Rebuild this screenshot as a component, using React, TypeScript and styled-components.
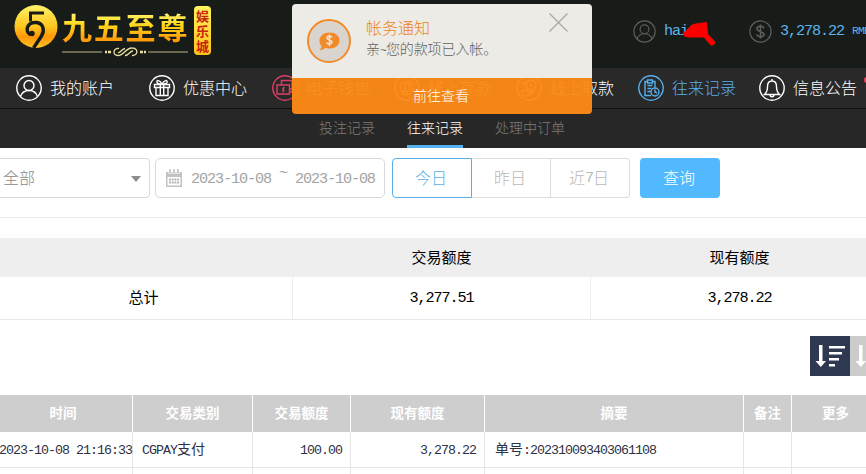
import React from "react";
import styled, { createGlobalStyle, css } from "styled-components";

const GlobalStyle = createGlobalStyle`
  * { box-sizing: border-box; }
  body { margin: 0; background: #fff; overflow: hidden; }
`;

const Page = styled.div`
  position: relative;
  width: 866px;
  height: 474px;
  overflow: hidden;
  background: #fff;
  font-family: "Noto Sans CJK SC", sans-serif;
  font-weight: 300;
  font-size: 16px;
  line-height: 1;
  white-space: nowrap;
`;

/* Half-width Latin text: every glyph advances exactly $cell pixels. */
const Mono = styled.span<{ $cell: number }>`
  font-family: "Liberation Mono", "Noto Sans CJK SC", monospace;
  font-size: ${(p) => p.$cell * 1.9}px;
  letter-spacing: ${(p) => p.$cell - p.$cell * 1.9 * 0.6001}px;
`;

const TopBar = styled.header`
  display: flex;
  height: 68px;
  background: #181c19;
`;

const Logo = styled.div`
  display: flex;
  flex: none;
  width: 633px;
  padding: 4px 0 0 13px;
`;

const Emblem = styled.svg`
  flex: none;
  width: 46px;
  height: 46px;
`;

const Brand = styled.div`
  display: flex;
  flex: none;
  flex-direction: column;
  width: 131px;
  margin: 4px 0 0 3px;
`;

const BrandName = styled.div`
  height: 36px;
  line-height: 36px;
  font-size: 30px;
  font-weight: 700;
  letter-spacing: 1.8px;
  color: transparent;
  background: linear-gradient(#fff67c 10%, #ffd91c 45%, #ff9d08 88%);
  -webkit-background-clip: text;
  background-clip: text;
`;

const Flourish = styled.svg`
  width: 126px;
  height: 10px;
  margin-top: 3px;
`;

const BrandTag = styled.div`
  flex: none;
  width: 17px;
  height: 49px;
  margin: 2px 0 0 1px;
  padding-top: 2px;
  border-radius: 4px;
  background: linear-gradient(#fff45e, #ffc21a);
  color: #c8230c;
  font-size: 13px;
  font-weight: 700;
  line-height: 15px;
  text-align: center;
  white-space: normal;
`;

const Account = styled.div<{ $width: number }>`
  position: relative;
  display: flex;
  flex: none;
  align-items: center;
  width: ${(p) => p.$width}px;
  height: 62px;
  gap: 8px;
  color: #5cb3ec;
`;

const AccountText = styled(Mono)`
  padding-top: 2px;
`;

const SmallIcon = styled.svg`
  flex: none;
  width: 23px;
  height: 23px;
  fill: none;
  stroke: #5c5d5c;
  stroke-width: 1.3;
`;

const Scribble = styled.svg`
  position: absolute;
  left: 48px;
  top: 19px;
  width: 38px;
  height: 28px;
`;

const NavBar = styled.nav`
  display: flex;
  height: 41px;
  padding-left: 16px;
  background: #292929;
  border-bottom: 1px solid #101010;
`;

const NavItem = styled.a<{ $width: number; $color?: string }>`
  display: flex;
  flex: none;
  align-items: center;
  gap: 8px;
  width: ${(p) => p.$width}px;
  color: ${(p) => p.$color ?? "#fff"};
`;

const NavLabel = styled.span`
  padding-bottom: 2px;
`;

const NavIcon = styled.svg<{ $color?: string }>`
  flex: none;
  width: 26px;
  height: 26px;
  fill: none;
  stroke: ${(p) => p.$color ?? "currentColor"};
  stroke-width: 1.4;
`;

const NewDot = styled.i`
  position: absolute;
  left: 864px;
  top: 77px;
  width: 6px;
  height: 6px;
  border-radius: 50%;
  background: #ee4568;
`;

const SubNav = styled.nav`
  display: flex;
  gap: 32px;
  height: 39px;
  padding-left: 319px;
  background: #272727;
  font-size: 14px;
`;

const SubTab = styled.a<{ $active?: boolean }>`
  height: 39px;
  padding-top: 11px;
  color: ${(p) => (p.$active ? "#fff" : "#7c7c7c")};
  ${(p) => p.$active && css`border-bottom: 3px solid #53b4ef;`}
`;

const Filters = styled.section`
  display: flex;
  height: 70px;
  padding-top: 10px;
  border-bottom: 1px solid #ececec;
  color: #a4a4a4;
`;

const Select = styled.div`
  display: flex;
  align-items: center;
  justify-content: space-between;
  width: 154px;
  height: 40px;
  margin: 0 5px 0 -4px;
  padding: 0 8px 3px 6px;
  border: 1px solid #d8d8da;
  border-radius: 4px;
  color: #888;
`;

const Caret = styled.i`
  margin-top: 4px;
  border: 5px solid transparent;
  border-top: 6px solid #8c8c8c;
  border-bottom: 0;
`;

const DateRange = styled.div`
  display: flex;
  align-items: center;
  width: 230px;
  height: 40px;
  padding-left: 9px;
  border: 1px solid #d8d8da;
  border-radius: 5px;
`;

const CalendarIcon = styled.svg`
  width: 18px;
  height: 18px;
  margin-right: 8px;
`;

const DateText = styled(Mono)`
  padding-top: 3px;
`;

const Tilde = styled(Mono)`
  width: 24px;
  padding: 0 0 8px 8px;
`;

const Segments = styled.div`
  display: flex;
  width: 238px;
  height: 40px;
  margin: 0 10px 0 7px;
`;

const Segment = styled.button<{ $active?: boolean }>`
  display: flex;
  flex: 1;
  align-items: center;
  justify-content: center;
  padding: 0 2px 3px 0;
  border: 1px solid #dcdce0;
  border-left-width: 0;
  background: #fff;
  color: #b8b8b8;
  font: inherit;
  &:last-child { border-radius: 0 4px 4px 0; }
  ${(p) => p.$active && css`
    border: 1px solid #58b0e6;
    border-radius: 4px 0 0 4px;
    color: #58afe4;
  `}
`;

const QueryButton = styled.button`
  width: 80px;
  height: 40px;
  padding: 0 2px 3px 0;
  border: 0;
  border-radius: 4px;
  background: #52b9ff;
  color: #fff;
  font: inherit;
`;

const Summary = styled.section`
  display: grid;
  grid-template-columns: repeat(3, 298px);
  grid-template-rows: 39px 43px;
  margin: 20px 0 0 -5px;
  font-size: 15px;
  font-weight: 400;
  color: #000;
`;

const SummaryCell = styled.div<{ $head?: boolean }>`
  display: flex;
  align-items: center;
  justify-content: center;
  padding-bottom: 3px;
  ${(p) =>
    p.$head
      ? css`background: #eee; padding-right: 1px;`
      : css`border-right: 1px solid #ececec; border-bottom: 1px solid #e8e8e8;`}
`;

const Amount = styled(Mono)`
  padding-top: 5px;
`;

const Sorting = styled.div`
  display: flex;
  height: 40px;
  margin: 16px 0 19px 810px;
`;

const SortButton = styled.button<{ $active?: boolean }>`
  flex: none;
  width: 40px;
  height: 40px;
  padding: 0;
  border: 0;
  background: ${(p) => (p.$active ? "#2e3850" : "#ccc")};
`;

const RecordTable = styled.section`
  display: grid;
  grid-template-columns: 139px 120px 98px 134px 259px 48px 88px;
  grid-template-rows: 37px 36px 36px;
  margin-left: -6px;
  font-size: 14px;
  font-weight: 400;
  color: #2c3143;
`;

const HeadCell = styled.div`
  display: flex;
  align-items: center;
  justify-content: center;
  padding-bottom: 1px;
  border-right: 1px solid #fff;
  background: #cecece;
  color: #fff;
  font-size: 13.5px;
  font-weight: 700;
`;

const Cell = styled.div<{ $right?: boolean }>`
  height: 36px;
  line-height: 33px;
  text-align: ${(p) => (p.$right ? "right" : "left")};
  padding: ${(p) => (p.$right ? "0 8px 0 0" : "0 0 0 10px")};
  border-right: 1px solid #e6e6e6;
  border-bottom: 1px solid #e6e6e6;
  &:nth-child(7n + 1) { padding-left: 5px; }
  &:nth-child(7n + 2) { padding-left: 9px; }
`;

const Notice = styled.aside`
  position: absolute;
  left: 292px;
  top: 4px;
  display: flex;
  flex-direction: column;
  width: 300px;
  height: 110px;
  border-radius: 4px;
  overflow: hidden;
`;

const NoticeBody = styled.div`
  display: flex;
  height: 74px;
  padding: 15px 24px 0 15px;
  background: #edebe6;
`;

const NoticeIcon = styled.svg`
  width: 44px;
  height: 44px;
`;

const NoticeText = styled.div`
  flex: 1;
  padding-left: 15px;
`;

const NoticeTitle = styled.div`
  height: 20px;
  line-height: 16px;
  color: #ee8420;
`;

const NoticeMessage = styled.div`
  height: 22px;
  line-height: 19px;
  font-size: 14px;
  letter-spacing: -0.1px;
  color: #606060;
`;

const CloseIcon = styled.svg`
  width: 19px;
  height: 19px;
  margin-top: -6px;
  stroke: #aaa9a6;
  stroke-width: 1.3;
`;

const NoticeAction = styled.button`
  height: 36px;
  padding: 0 2px 2px 0;
  border: 0;
  background: rgba(252, 138, 22, 0.96);
  color: #fff;
  font: inherit;
  font-size: 14px;
`;

const glyphs: Record<string, React.ReactNode> = {
  user: (
    <>
      <circle cx="13" cy="10.5" r="5" />
      <path d="M4.5 21.5c1.3-4 4.4-6 8.5-6s7.2 2 8.5 6" />
    </>
  ),
  gift: (
    <path d="M5.500 9.500h15v3h-15zM7 12.500h12v8H7zM11.300 9.500v11M14.700 9.500v11M13 9c-2-4-6-4.500-5-1.500.5 1.500 3 1.500 5 1.500 2 0 4.500 0 5-1.500 1-3-3-2.500-5 1.500" />
  ),
  wallet: (
    <>
      <path d="M5 10h12.500v9H5zM9.500 10V5.500H20v11.500h-2.500M17 14h3" />
      <path d="M12.800 12.800c-2.500-.8-3 1.500-1.500 1.700s1.500 2.200-1.300 1.500M11.400 12v5.300" strokeWidth="1" />
    </>
  ),
  coin: (
    <>
      <circle cx="11" cy="12" r="5" />
      <path d="M8 18c4 4 11 1 11-5M15 6l4 3M11 9v6" />
    </>
  ),
  cash: (
    <>
      <circle cx="15" cy="10" r="5" />
      <path d="M5 17l5-2 7 3M7 8h4M15 8v4M5 20l6 1 8-5" />
    </>
  ),
  records: (
    <>
      <path d="M13 20.500H7v-14h2.500M14.500 6.500H17v6M9.500 5h5v3h-5zM9.500 10.500h5M9.500 13.500h4M9.500 16.500h3" />
      <circle cx="17" cy="17" r="4" />
      <path d="M17 14.500V17l2 1" />
    </>
  ),
  bell: (
    <path d="M5.500 19.500c2.300-2 3-4.500 3-8 0-3.500 1.800-5.500 4.500-5.500s4.500 2 4.500 5.500c0 3.500.7 6 3 8zM11 19.500c0 3 4 3 4 0M13 6V4" />
  ),
};

const navItems = [
  { label: "我的账户", icon: "user", width: 133 },
  { label: "优惠中心", icon: "gift", width: 123 },
  { label: "电子钱包", icon: "wallet", width: 122, tint: "#df3f64" },
  { label: "线上存款", icon: "coin", width: 122 },
  { label: "线上取款", icon: "cash", width: 122 },
  { label: "往来记录", icon: "records", width: 121, tint: "#58b0ec" },
  { label: "信息公告", icon: "bell", width: 107 },
];

const SortGlyph = () => (
  <svg width="40" height="40" fill="#fff">
    <path d="M9 9h3.500v16H16l-5.200 6L5.500 25H9zM19 10h16v2.600H19zM19 16h13v2.600H19zM19 22h10v2.600H19zM19 28h6v2.600h-6z" />
  </svg>
);

export default function App() {
  return (
    <Page>
      <GlobalStyle />
      <TopBar>
        <Logo>
          <Emblem viewBox="0 0 46 46">
            <defs>
              <linearGradient id="gold" x2="0" y2="1">
                <stop stopColor="#fff36a" />
                <stop offset=".5" stopColor="#ffc51c" />
                <stop offset=".75" stopColor="#ff9707" />
                <stop offset="1" stopColor="#ffc62a" />
              </linearGradient>
            </defs>
            <circle cx="23" cy="22.500" r="21.500" fill="url(#gold)" />
            <path
              d="M31 9H17.500V17.500"
              fill="none"
              stroke="#181c19"
              strokeWidth="3"
            />
            <path
              d="M17.500 31C11.500 26.500 14 18.500 22.500 18.500c8 0 9.500 8 6 13.500L20.500 44"
              fill="none"
              stroke="#181c19"
              strokeWidth="3.400"
            />
            <circle cx="19" cy="29.500" r="2.700" fill="#181c19" />
          </Emblem>
          <Brand>
            <BrandName>九五至尊</BrandName>
            <Flourish viewBox="0 0 126 10" fill="none" stroke="#e9dda0">
              <path d="M0 5h40M86 5h40" strokeWidth=".8" />
              <path d="M43 5h2M46 5h3M78 5h3M82 5h2" strokeWidth="2.500" />
              <path
                d="M57 1.500c-6-1-7 7-1 7 6 0 8-8 14-7.500 7 0 6 8 0 7.500M56 5.500c2 1 3-3 7-4M63 8.500c4 0 5-5 8-4.500"
                strokeWidth="1.300"
              />
            </Flourish>
          </Brand>
          <BrandTag>娱乐城</BrandTag>
        </Logo>
        <Account $width={116}>
          <SmallIcon viewBox="0 0 26 26">
            <circle cx="13" cy="13" r="12" />
            {glyphs.user}
          </SmallIcon>
          <AccountText $cell={8}>hai</AccountText>
          <Scribble viewBox="0 0 38 28">
            <path
              d="M2 14.500L5 12l6-6 4-1 10.500-1.500 1 11.500 7 7.500q1 3-2 3.500-2 .5-3-1.500L23 18H9l-5-.5z"
              fill="#fc0000"
              stroke="#fc0000"
              strokeLinejoin="round"
            />
          </Scribble>
        </Account>
        <Account $width={130}>
          <SmallIcon viewBox="0 0 26 26">
            <circle cx="13" cy="13" r="12" />
            <path d="M17 9.500c-1-3.500-8-3-8 .3S17 12.700 17 16.200s-7 4-8.300.3M13 5v16" strokeWidth="1.800" />
          </SmallIcon>
          <AccountText $cell={8}>3,278.22</AccountText>
          <AccountText $cell={6}>RMB</AccountText>
        </Account>
      </TopBar>

      <NavBar>
        {navItems.map((item) => (
          <NavItem
            key={item.icon}
            $width={item.width}
            $color={item.icon === "records" ? item.tint : undefined}
          >
            <NavIcon viewBox="0 0 26 26" $color={item.tint}>
              <circle cx="13" cy="13" r="12.200" />
              {glyphs[item.icon]}
            </NavIcon>
            <NavLabel>{item.label}</NavLabel>
          </NavItem>
        ))}
      </NavBar>
      <NewDot />

      <SubNav>
        <SubTab>投注记录</SubTab>
        <SubTab $active>往来记录</SubTab>
        <SubTab>处理中订单</SubTab>
      </SubNav>

      <Filters>
        <Select>
          全部
          <Caret />
        </Select>
        <DateRange>
          <CalendarIcon viewBox="0 0 18 18">
            <path d="M1 3h16v15H1z" fill="#c2c2c2" />
            <path d="M2.500 8h13v8.500h-13z" fill="#fff" />
            <path d="M5 0v5M9 0v5M13 0v5" stroke="#fff" strokeWidth="3" />
            <path d="M5 0v4.500M9 0v4.500M13 0v4.500" stroke="#bbb" strokeWidth="1.500" />
            <path d="M4 10.500h10M4 13.500h10" stroke="#b5b5b5" strokeWidth="1.800" strokeDasharray="2 .7" />
          </CalendarIcon>
          <DateText $cell={8}>2023-10-08</DateText>
          <Tilde $cell={8}>~</Tilde>
          <DateText $cell={8}>2023-10-08</DateText>
        </DateRange>
        <Segments>
          <Segment $active>今日</Segment>
          <Segment>昨日</Segment>
          <Segment>
            近<Amount $cell={8}>7</Amount>日
          </Segment>
        </Segments>
        <QueryButton>查询</QueryButton>
      </Filters>

      <Summary>
        <SummaryCell $head />
        <SummaryCell $head>交易额度</SummaryCell>
        <SummaryCell $head>现有额度</SummaryCell>
        <SummaryCell>总计</SummaryCell>
        <SummaryCell>
          <Amount $cell={8}>3,277.51</Amount>
        </SummaryCell>
        <SummaryCell>
          <Amount $cell={8}>3,278.22</Amount>
        </SummaryCell>
      </Summary>

      <Sorting>
        <SortButton $active>
          <SortGlyph />
        </SortButton>
        <SortButton>
          <SortGlyph />
        </SortButton>
      </Sorting>

      <RecordTable>
        {["时间", "交易类别", "交易额度", "现有额度", "摘要", "备注", "更多"].map((title) => (
          <HeadCell key={title}>{title}</HeadCell>
        ))}
        <Cell>
          <Mono $cell={7}>2023-10-08 21:16:33</Mono>
        </Cell>
        <Cell>
          <Mono $cell={7}>CGPAY</Mono>支付
        </Cell>
        <Cell $right>
          <Mono $cell={7}>100.00</Mono>
        </Cell>
        <Cell $right>
          <Mono $cell={7}>3,278.22</Mono>
        </Cell>
        <Cell>
          单号<Mono $cell={7}>:202310093403061108</Mono>
        </Cell>
        <Cell />
        <Cell />
        {Array.from({ length: 7 }, (_, i) => (
          <Cell key={i} />
        ))}
      </RecordTable>

      <Notice>
        <NoticeBody>
          <NoticeIcon viewBox="0 0 44 44">
            <circle cx="22" cy="22" r="21" fill="#d9d5ce" stroke="#f18b29" strokeWidth="2" />
            <path
              d="M22.500 13.500c6 0 10 3.500 10 8s-4 8-10 8c-1.500 0-3-.3-4-.8-1.500 1.500-3.500 2.300-6 2.300 1.300-1 2-2.500 2-4-1.500-1.500-2-3.500-2-5.500 0-4.500 4-8 10-8z"
              fill="#f08a2b"
            />
            <path
              d="M25 18.500c-1-1.800-5-1.600-5 .6s5 1.700 5 4-4.500 2.400-5.500.4M22.500 15.500v11.500"
              fill="none"
              stroke="#eee5da"
              strokeWidth="1.500"
            />
          </NoticeIcon>
          <NoticeText>
            <NoticeTitle>帐务通知</NoticeTitle>
            <NoticeMessage>
              亲<Mono $cell={6}>~</Mono>您的款项已入帐。
            </NoticeMessage>
          </NoticeText>
          <CloseIcon viewBox="0 0 19 19">
            <path d="M.5.5l18 18M18.500.5l-18 18" />
          </CloseIcon>
        </NoticeBody>
        <NoticeAction>前往查看</NoticeAction>
      </Notice>
    </Page>
  );
}
